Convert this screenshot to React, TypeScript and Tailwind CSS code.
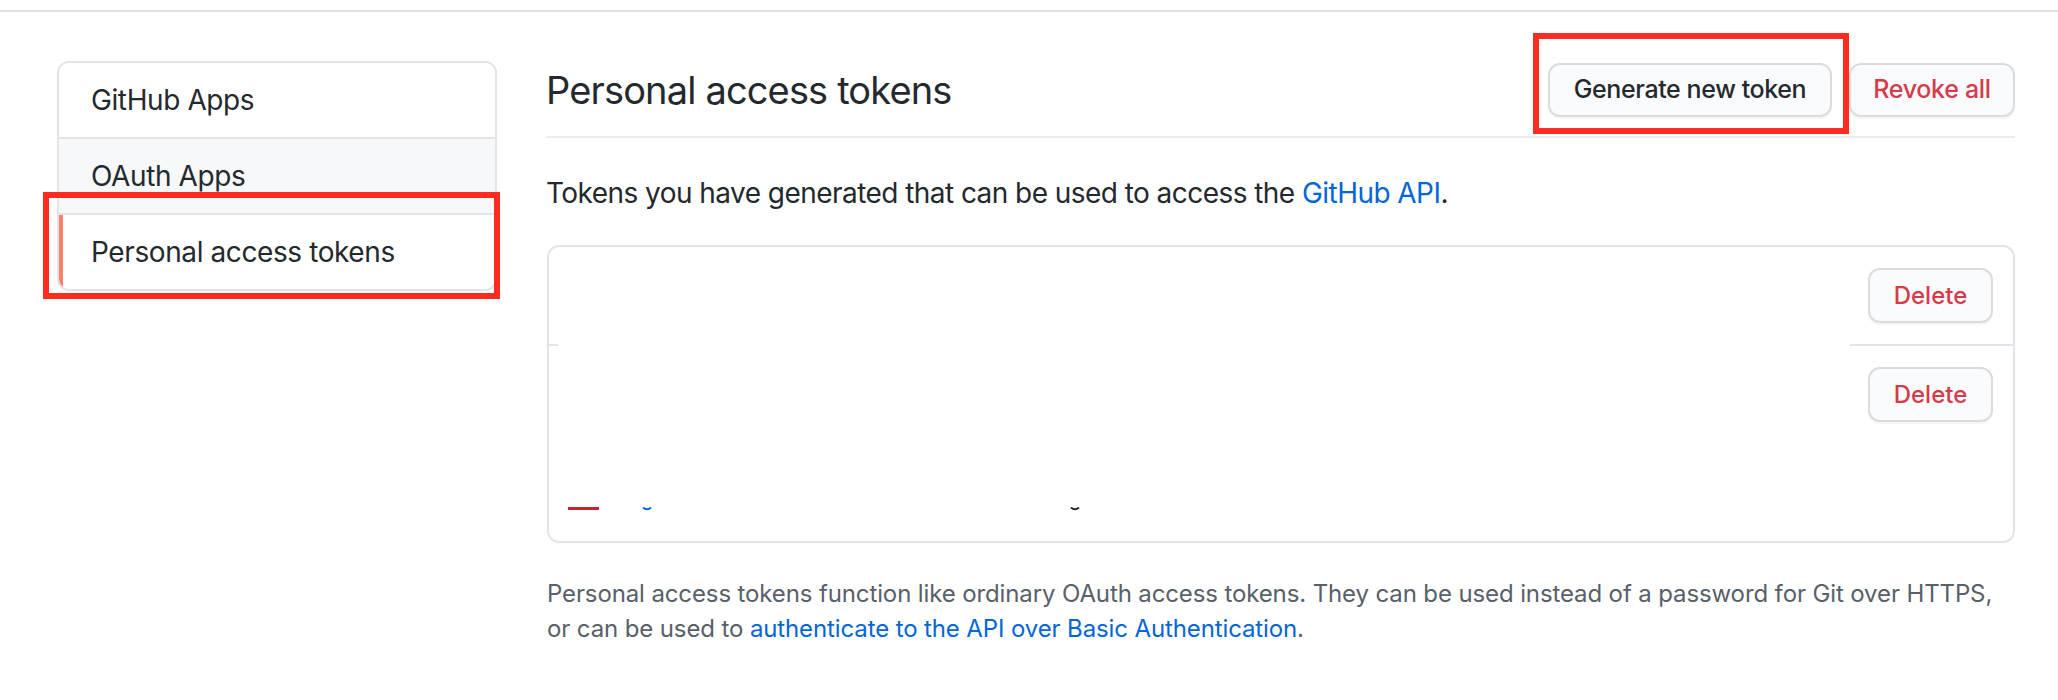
import React from 'react';

const font = { fontFamily: 'Inter, "Noto Sans", sans-serif' };

function SideItem({ label, active, hover, last }: { label: string; active?: boolean; hover?: boolean; last?: boolean }) {
  return (
    <div
      className={`relative flex items-center pl-[32px] text-[28px] tracking-[-0.4px] text-[#24292e] ${last ? 'h-[74px]' : 'h-[76px] border-b-2 border-[#e1e4e8]'} ${hover ? 'bg-[#f6f8fa]' : 'bg-white'}`}
    >
      {active && <span className="absolute left-0 top-0 bottom-0 w-[4px] bg-[#f9826c]" />}
      {label}
    </div>
  );
}

function Btn({ children, danger, className = '' }: { children: React.ReactNode; danger?: boolean; className?: string }) {
  return (
    <button
      type="button"
      className={`flex items-center justify-center rounded-[12px] border-2 border-[#dadcdf] bg-[#fafbfc] font-medium shadow-[0_2px_0_rgba(27,31,35,0.04)] ${danger ? 'text-[#d73a49]' : 'text-[#24292e]'} ${className}`}
    >
      {children}
    </button>
  );
}

export default function App() {
  return (
    <div className="relative h-[700px] w-[2058px] overflow-hidden bg-white" style={font}>
      <div className="mt-[10px] h-[2px] bg-[#e1e4e8]" />

      <div className="flex pl-[57px] pr-[43px] pt-[49px]">
        {/* Sidebar menu */}
        <nav className="w-[440px] shrink-0 self-start overflow-hidden rounded-[12px] border-2 border-[#e1e4e8]">
          <SideItem label="GitHub Apps" />
          <SideItem label="OAuth Apps" hover />
          <SideItem label="Personal access tokens" active last />
        </nav>

        {/* Main column */}
        <main className="ml-[49px] flex-1">
          <div className="flex items-center justify-between border-b-2 border-[#eaecef] pb-[19px] pt-[2px]">
            <h1 className="text-[38px] font-normal leading-[54px] tracking-[-0.85px] text-[#24292e]">Personal access tokens</h1>
            <div className="flex gap-[17px]">
              <Btn className="h-[54px] w-[284px] text-[25px] tracking-[-0.4px]">Generate new token</Btn>
              <Btn danger className="h-[54px] w-[166px] text-[25px] tracking-[-0.3px]">Revoke all</Btn>
            </div>
          </div>

          <p className="mt-[34px] text-[28px] leading-[42px] tracking-[-0.55px] text-[#24292e]">
            Tokens you have generated that can be used to access the{' '}
            <a className="text-[#0366d6]">GitHub API</a>.
          </p>

          <div className="relative ml-[1px] mt-[31px] rounded-[12px] border-2 border-[#e1e4e8]">
            <div className="flex h-[99px] justify-end border-b-2 border-[#e1e4e8] pr-[20px] pt-[21px]">
              <Btn danger className="h-[55px] w-[125px] text-[24px]">Delete</Btn>
            </div>
            <div className="flex h-[195px] justify-end pr-[20px] pt-[21px]">
              <Btn danger className="h-[55px] w-[125px] text-[24px]">Delete</Btn>
            </div>

            {/* redacted token details */}
            <div className="absolute left-[9px] top-0 h-[259px] w-[1292px] bg-white" />
            <span className="absolute left-[19px] top-[260px] h-[3px] w-[31px] bg-[#cb2431]" />
            <svg className="absolute left-[93px] top-[260px]" width="10" height="4" viewBox="0 0 10 4">
              <path d="M1 0.5 Q5 4 9 0.5" stroke="#0366d6" strokeWidth="2" fill="none" />
            </svg>
            <svg className="absolute left-[521px] top-[260px]" width="10" height="4" viewBox="0 0 10 4">
              <path d="M1 0.5 Q5 4 9 0.5" stroke="#24292e" strokeWidth="2" fill="none" />
            </svg>
          </div>

          <p className="ml-[1px] mt-[33px] text-[24px] leading-[35px] tracking-[-0.12px] text-[#586069]">
            <span className="block whitespace-nowrap">
              Personal access tokens function like ordinary OAuth access tokens. They can be used instead of a password for Git over HTTPS,
            </span>
            <span className="block whitespace-nowrap">
              or can be used to <a className="text-[#0366d6]">authenticate to the API over Basic Authentication</a>.
            </span>
          </p>
        </main>
      </div>

      {/* screenshot annotations */}
      <div className="absolute left-[43px] top-[192px] h-[107px] w-[457px] border-[6px] border-[#fd2b20]" />
      <div className="absolute left-[1533px] top-[33px] h-[101px] w-[316px] border-[6px] border-[#fd2b20]" />
    </div>
  );
}
